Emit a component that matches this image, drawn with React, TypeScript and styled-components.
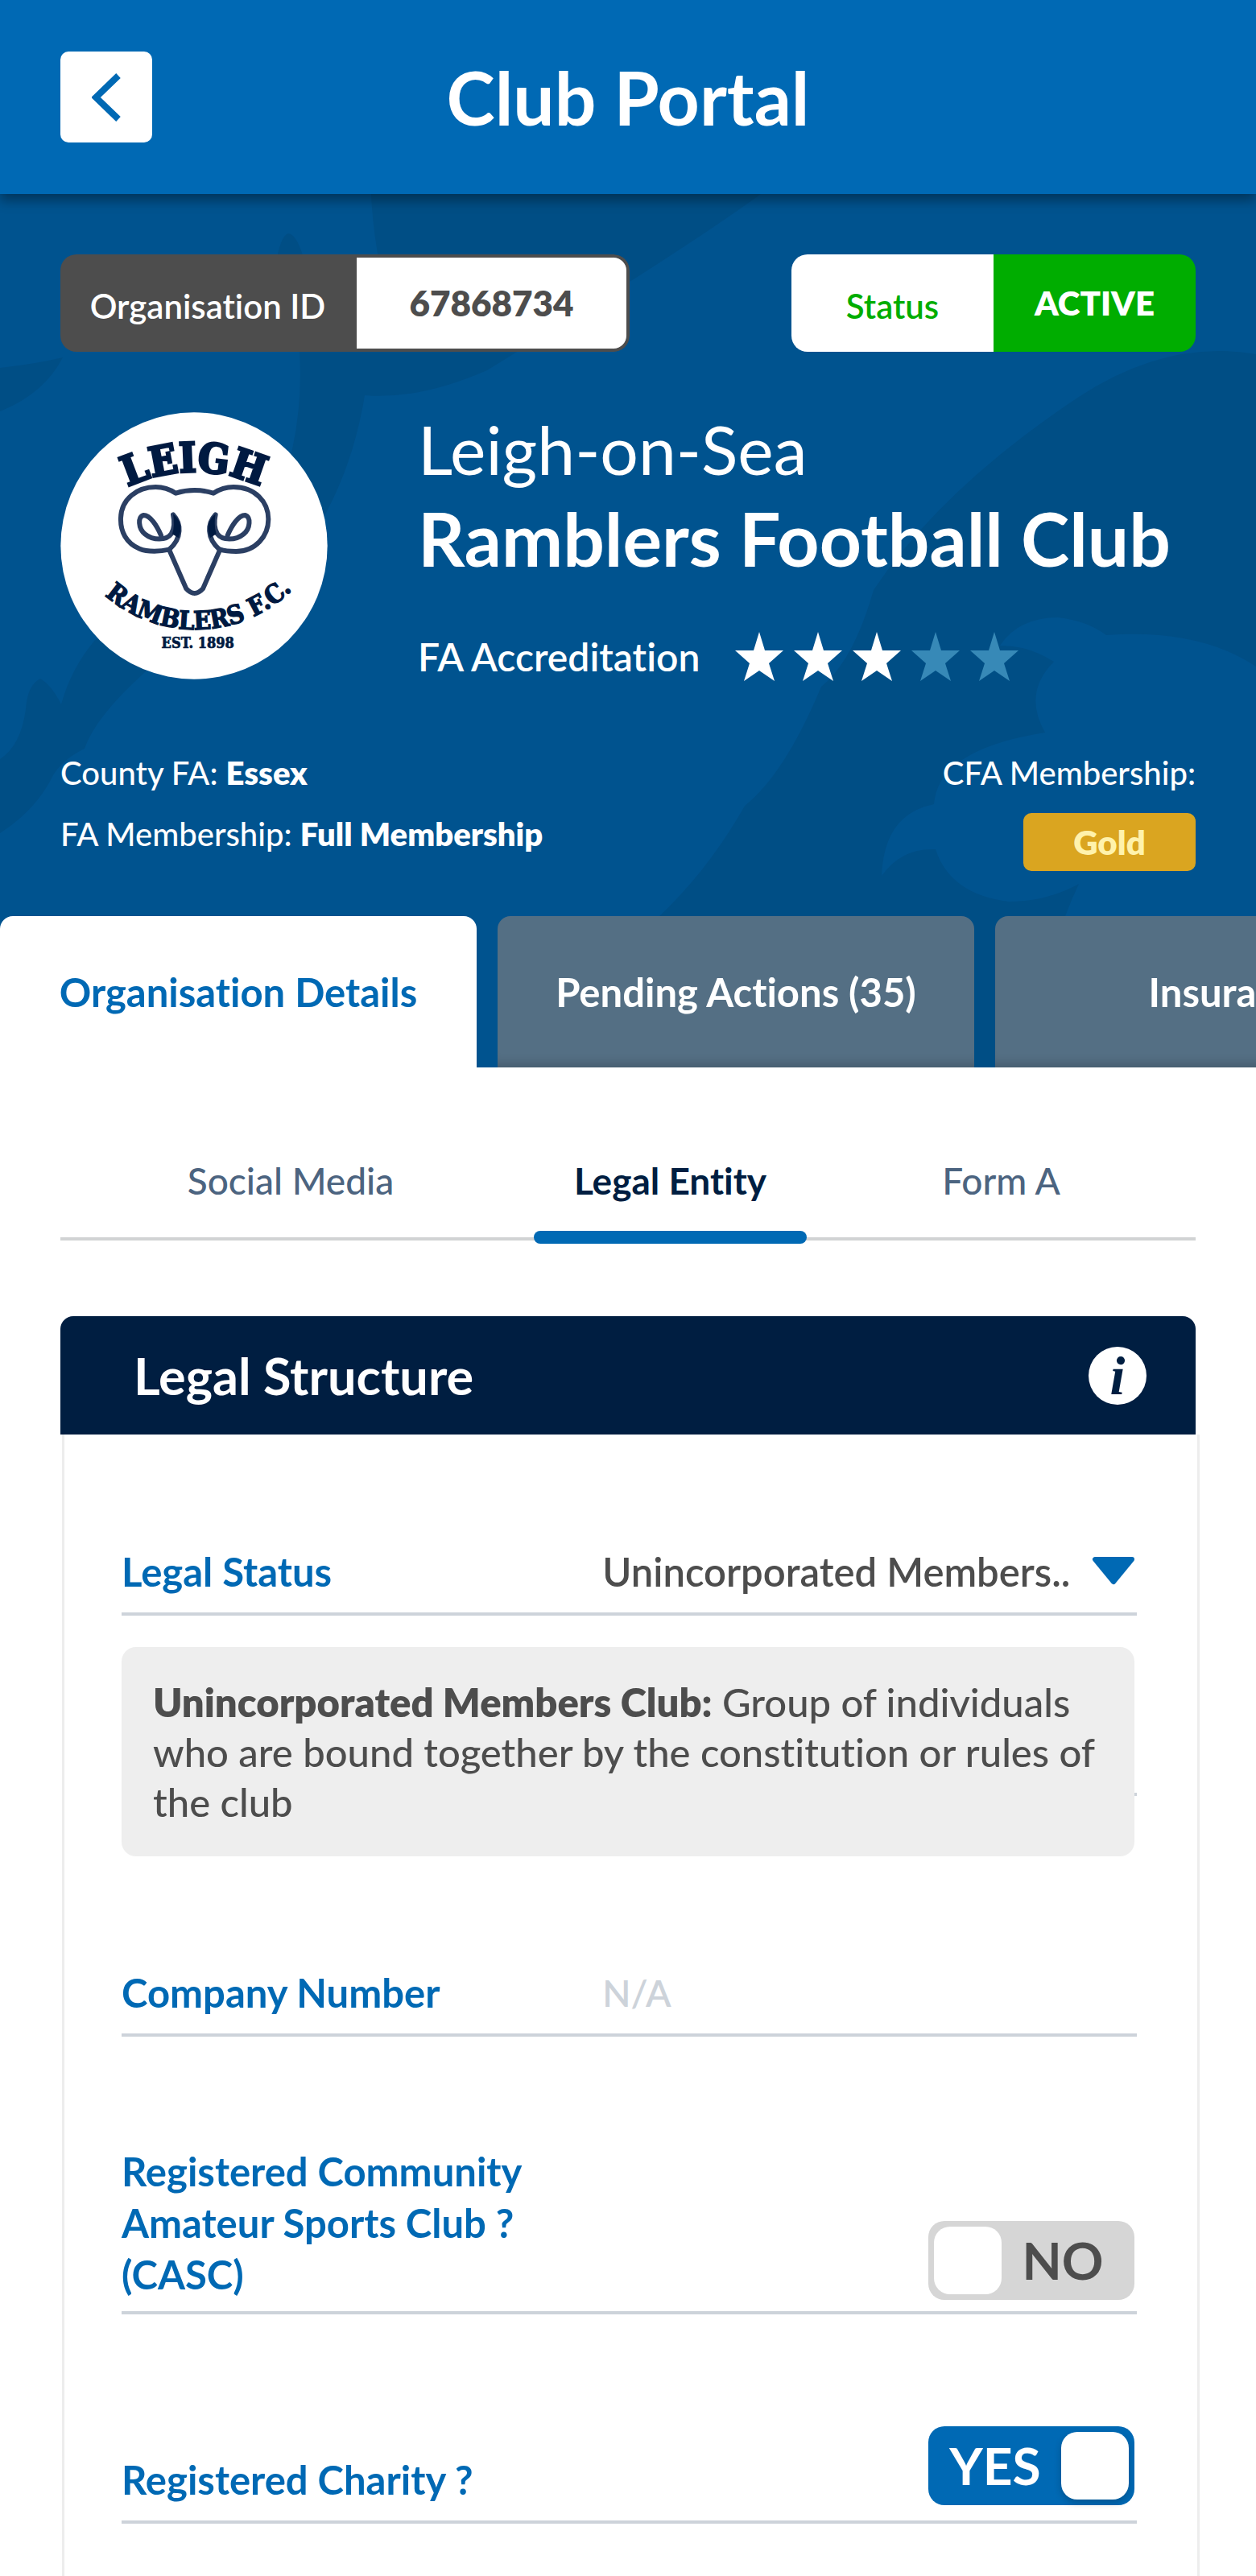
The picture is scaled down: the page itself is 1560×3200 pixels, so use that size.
import React, { useState } from "react";
import styled, { createGlobalStyle } from "styled-components";

const color = {
  blue: "#0069b4",
  hero: "#00538f",
  heroDark: "#004e85",
  navy: "#001e41",
  slate: "#546f84",
  slateText: "#4c6480",
  grey: "#4d4d4d",
  rule: "#cdd3da",
  green: "#00ad00",
};

const GlobalStyle = createGlobalStyle`
  *, *::before, *::after { box-sizing: border-box; }
  body { margin: 0; background: #fff; }
  body, button, input, select {
    font-family: Lato, "Open Sans", sans-serif;
    font-variant-ligatures: none;
  }
`;

const Page = styled.div`
  display: flex;
  flex-direction: column;
  min-height: 100vh;
  overflow-x: hidden;
  font-size: 49px;
  line-height: 64px;
`;

const Header = styled.header`
  position: relative;
  z-index: 1;
  display: grid;
  grid-template-columns: 114px 1fr 114px;
  align-items: center;
  padding: 64px 75px;
  background: ${color.blue};
  box-shadow: 0 8px 14px rgba(0, 0, 0, 0.36);
`;

const BackButton = styled.button`
  display: grid;
  place-items: center;
  height: 113px;
  padding: 0;
  border: 0;
  border-radius: 10px;
  background: #fff;
  cursor: pointer;
`;

const Title = styled.h1`
  margin: 0;
  color: #fff;
  font-size: 91px;
  line-height: 112px;
  font-weight: 700;
  text-align: center;
`;

const Hero = styled.section`
  position: relative;
  isolation: isolate;
  padding-top: 75px;
  background: ${color.hero};
  color: #fff;
`;

const HeroArt = styled.svg`
  position: absolute;
  inset: 0;
  z-index: -1;
  width: 100%;
  height: 100%;
`;

const Spread = styled.div`
  display: flex;
  justify-content: space-between;
  padding: 0 75px;
`;

const Pill = styled.dl`
  display: flex;
  margin: 0;
  height: 121px;
  overflow: hidden;
  border-radius: 20px;
  font-size: 42px;
  line-height: 121px;
  text-align: center;
`;

const PillLabel = styled.dt`
  padding-top: 4px;
  font-weight: 600;
`;

const IdLabel = styled(PillLabel)`
  width: 366px;
  background: ${color.grey};
`;

const IdValue = styled.dd`
  width: 341px;
  margin: 0;
  border: 4px solid ${color.grey};
  border-left-width: 2px;
  border-radius: 0 20px 20px 0;
  background: #fff;
  color: ${color.grey};
  font-size: 44px;
  font-weight: 800;
  line-height: 113px;
`;

const StatusLabel = styled(PillLabel)`
  width: 251px;
  background: #fff;
  color: ${color.green};
`;

const StatusValue = styled.dd`
  width: 251px;
  margin: 0;
  background: ${color.green};
  font-weight: 800;
`;

const Identity = styled.div`
  display: flex;
  gap: 112px;
  padding: 75px 75px 0;
`;

const Crest = styled.svg`
  flex: none;
  width: 332px;
  height: 332px;
`;

const ClubName = styled.h2`
  margin: 0;
  font-size: 91px;
  line-height: 130px;
  font-weight: 700;
  white-space: nowrap;
`;

const Place = styled.span`
  display: block;
  font-size: 84px;
  line-height: 92px;
  font-weight: 400;
`;

const Accreditation = styled.div`
  display: flex;
  align-items: center;
  gap: 44px;
  margin-top: 50px;
  font-size: 48px;
  font-weight: 600;
`;

const Stars = styled.div`
  display: flex;
  gap: 13px;
`;

const Memberships = styled(Spread)`
  margin-top: 74px;
  font-size: 40px;
  line-height: 76px;
`;

const Line = styled.p`
  margin: 0;
  font-weight: 500;
  b { font-weight: 800; }
`;

const RightColumn = styled.div`
  display: flex;
  flex-direction: column;
  align-items: flex-end;
  gap: 12px;
`;

const GoldBadge = styled.span`
  width: 214px;
  border-radius: 10px;
  background: #daa520;
  color: #fff2ac;
  font-size: 42px;
  font-weight: 800;
  line-height: 72px;
  text-align: center;
`;

const Tabs = styled.nav`
  display: flex;
  gap: 26px;
  margin-top: 56px;
  overflow: hidden;
`;

const Tab = styled.a<{ $active?: boolean }>`
  flex: none;
  width: 592px;
  border-radius: 16px 16px 0 0;
  background: ${(p) => (p.$active ? "#fff" : color.slate)};
  box-shadow: ${(p) => (p.$active ? "none" : "inset 0 -16px 14px -12px rgba(0, 0, 0, 0.2)")};
  color: ${(p) => (p.$active ? color.blue : "#fff")};
  font-weight: 700;
  line-height: 188px;
  text-align: center;
  text-decoration: none;
`;

const SubTabs = styled.nav`
  display: grid;
  grid-template-columns: 572fr 355fr 483fr;
  margin: 70px 75px 0;
  border-bottom: 4px solid #d1d3d4;
`;

const SubTab = styled.a<{ $active?: boolean }>`
  position: relative;
  padding-left: ${(p) => (p.$active ? 16 : 0)}px;
  color: ${(p) => (p.$active ? color.navy : color.slateText)};
  font-size: 46px;
  font-weight: ${(p) => (p.$active ? 700 : 500)};
  line-height: 141px;
  text-align: center;
  text-decoration: none;

  &::after {
    content: "";
    display: ${(p) => (p.$active ? "block" : "none")};
    position: absolute;
    right: 0;
    bottom: -8px;
    left: 16px;
    height: 16px;
    border-radius: 8px;
    background: ${color.blue};
  }
`;

const Card = styled.section`
  display: flex;
  flex: 1;
  flex-direction: column;
  margin: 94px 75px 0;
`;

const CardHeader = styled.div`
  display: flex;
  align-items: center;
  justify-content: space-between;
  height: 147px;
  padding: 0 61px 0 91px;
  border-radius: 16px 16px 0 0;
  background: ${color.navy};
`;

const CardTitle = styled.h3`
  margin: 0;
  color: #fff;
  font-size: 63px;
  font-weight: 700;
`;

const InfoButton = styled.button`
  width: 72px;
  height: 72px;
  padding: 0;
  border: 0;
  border-radius: 50%;
  background: #fff;
  color: ${color.navy};
  font: italic 700 68px/72px "Liberation Serif", serif;
`;

const CardBody = styled.form`
  flex: 1;
  margin: 0 -5px 0 2px;
  padding: 138px 75px 64px 71px;
  border: solid #ededed;
  border-width: 0 3px;
`;

const Field = styled.div<{ $gap?: number; $tight?: boolean }>`
  display: grid;
  grid-template-columns: 9fr 10fr;
  align-items: end;
  margin-top: ${(p) => p.$gap ?? 0}px;
  padding-bottom: ${(p) => (p.$tight ? 14 : 19)}px;
  border-bottom: 4px solid ${color.rule};
`;

const Label = styled.label`
  color: ${color.blue};
  font-weight: 700;
`;

const SelectWrap = styled.div`
  display: flex;
  align-items: center;
`;

const Select = styled.select`
  flex: 1;
  min-width: 0;
  height: 64px;
  padding: 0;
  border: 0;
  appearance: none;
  background: transparent;
  color: ${color.grey};
  font-size: 49px;
  font-weight: 600;
`;

const TextInput = styled.input`
  width: 100%;
  height: 64px;
  padding: 0;
  border: 0;
  background: transparent;
  color: ${color.grey};
  font-size: 46px;
  font-weight: 600;
  &::placeholder { color: ${color.rule}; opacity: 1; }
`;

const Note = styled.p`
  position: relative;
  margin: 39px 3px 0 0;
  padding: 37px 39px;
  border-radius: 18px;
  background: #eee;
  color: ${color.grey};
  font-weight: 500;
  line-height: 62px;
  b { font-weight: 800; }

  &::after {
    content: "";
    position: absolute;
    right: -3px;
    bottom: 75px;
    width: 3px;
    height: 4px;
    background: ${color.rule};
  }
`;

const Switch = styled.label<{ $on: boolean }>`
  display: flex;
  flex-direction: ${(p) => (p.$on ? "row" : "row-reverse")};
  align-items: center;
  justify-self: end;
  width: 256px;
  height: 98px;
  margin-right: 3px;
  padding: 7px;
  border-radius: 20px;
  background: ${(p) => (p.$on ? color.blue : "#d6d6d6")};
  color: ${(p) => (p.$on ? "#fff" : color.grey)};
  font-size: 64px;
  font-weight: 700;
  cursor: pointer;
`;

const SwitchText = styled.span`
  flex: 1;
  padding-right: 6px;
  text-align: center;
`;

const SwitchInput = styled.input`
  flex: none;
  width: 84px;
  height: 84px;
  margin: 0;
  appearance: none;
  border-radius: 20px;
  background: #fff;
  box-shadow: ${(p) => (p.checked ? "0 4px 10px rgba(0, 0, 0, 0.2)" : "none")};
`;

function Star({ on }: { on: boolean }) {
  return (
    <svg width="60" height="62" viewBox="0 0 60 62" aria-hidden="true">
      <path
        d="M30 0L37 23H60L42 39L49 61L30 48L11 61L18 39L0 23H23Z"
        fill={on ? "#fff" : "#3789b7"}
      />
    </svg>
  );
}

function ClubCrest() {
  return (
    <Crest viewBox="105 66 996 996" role="img" aria-label="Leigh Ramblers F.C. crest">
      <defs>
        <path id="crest-top" d="M300 376A570 570 0 0 1 907 376" />
        <path id="crest-bottom" d="M214 690A513 513 0 0 0 1022 668" />
      </defs>
      <circle cx="603" cy="564" r="497" fill="#fff" />
      <g
        fill="#001a41"
        stroke="#001a41"
        fontFamily="DejaVu Serif Condensed, DejaVu Serif, serif"
        fontWeight="700"
        textAnchor="middle"
      >
        <text fontSize="152" strokeWidth="9">
          <textPath href="#crest-top" startOffset="50%">LEIGH</textPath>
        </text>
        <text fontSize="95" strokeWidth="4">
          <textPath href="#crest-bottom" startOffset="50%">RAMBLERS F.C.</textPath>
        </text>
        <text x="617" y="946" fontSize="54" strokeWidth="2">EST. 1898</text>
      </g>
      <g fill="none" stroke="#2b3f63" strokeWidth="18" strokeLinejoin="round" strokeLinecap="round">
        <path d="M510 578C480 585 430 588 400 575C350 555 328 510 330 460C332 390 390 345 460 345C490 345 515 355 535 368C580 354 630 354 675 368C695 355 720 345 750 345C830 345 880 400 880 465C880 530 830 585 760 585C735 585 715 583 700 578L636 724Q605 758 574 724Z" />
        <path d="M480 525C465 490 440 450 415 450C392 455 395 500 420 520C450 545 500 545 518 520C530 500 530 470 525 448C555 480 560 535 510 578" />
        <path d="M728 525C743 490 768 450 793 450C816 455 813 500 788 520C758 545 708 545 690 520C678 500 678 470 683 448C653 480 648 535 698 578" />
      </g>
      <g fill="#001a41">
        <path d="M525 445Q568 480 545 535L522 520Q532 490 525 445Z" />
        <path d="M683 445Q640 480 663 535L686 520Q676 490 683 445Z" />
      </g>
    </Crest>
  );
}

function LionPattern() {
  return (
    <HeroArt viewBox="0 0 1560 1085" preserveAspectRatio="xMidYMin slice" aria-hidden="true">
      <g fill={color.heroDark}>
        <path d="M461 0Q463 45 472 90L380 90Q370 50 358 49Q348 52 342 90L372 196Q376 260 362 322L340 440L118 554Q88 590 76 634Q64 610 50 602Q34 610 32 640Q26 685 0 702V794Q45 765 66 722Q78 702 105 689Q118 650 180 594L405 396Q440 330 453 250Q520 256 605 219Q700 160 790 104Q890 40 945 0Z" />
        <path d="M0 216Q45 211 78 203Q55 248 0 270Z" />
        <path d="M1560 199Q1450 180 1340 252Q1170 365 1085 492Q1060 580 1020 612Q975 720 925 760Q880 840 816 900V1085H1290Q1295 950 1340 857Q1300 879 1253 879Q1180 870 1162 814Q1120 812 1095 847Q1098 770 1160 758Q1165 690 1298 669Q1270 620 1309 581Q1275 560 1242 561Q1265 526 1314 526Q1350 530 1374 548Q1490 540 1560 587Z" />
      </g>
    </HeroArt>
  );
}

function Toggle({ id, initial }: { id: string; initial: boolean }) {
  const [on, setOn] = useState(initial);
  return (
    <Switch $on={on}>
      <SwitchText>{on ? "YES" : "NO"}</SwitchText>
      <SwitchInput id={id} type="checkbox" role="switch" checked={on} onChange={(e) => setOn(e.target.checked)} />
    </Switch>
  );
}

export default function App() {
  return (
    <Page>
      <GlobalStyle />
      <Header>
        <BackButton type="button" aria-label="Back">
          <svg width="36" height="60" viewBox="0 0 36 60" aria-hidden="true">
            <path d="M33 3L5 30L33 57" fill="none" stroke={color.blue} strokeWidth="8" />
          </svg>
        </BackButton>
        <Title>Club Portal</Title>
      </Header>

      <Hero>
        <LionPattern />
        <Spread>
          <Pill>
            <IdLabel>Organisation ID</IdLabel>
            <IdValue>67868734</IdValue>
          </Pill>
          <Pill>
            <StatusLabel>Status</StatusLabel>
            <StatusValue>ACTIVE</StatusValue>
          </Pill>
        </Spread>
        <Identity>
          <ClubCrest />
          <div>
            <ClubName>
              <Place>Leigh-on-Sea</Place>
              Ramblers Football Club
            </ClubName>
            <Accreditation>
              FA Accreditation
              <Stars role="img" aria-label="3 out of 5 stars">
                {[1, 2, 3, 4, 5].map((n) => (
                  <Star key={n} on={n <= 3} />
                ))}
              </Stars>
            </Accreditation>
          </div>
        </Identity>
        <Memberships>
          <div>
            <Line>County FA: <b>Essex</b></Line>
            <Line>FA Membership: <b>Full Membership</b></Line>
          </div>
          <RightColumn>
            <Line>CFA Membership:</Line>
            <GoldBadge>Gold</GoldBadge>
          </RightColumn>
        </Memberships>
        <Tabs>
          <Tab href="#details" $active>Organisation Details</Tab>
          <Tab href="#actions">Pending Actions (35)</Tab>
          <Tab href="#insurance">Insurance</Tab>
        </Tabs>
      </Hero>

      <SubTabs>
        <SubTab href="#social">Social Media</SubTab>
        <SubTab href="#legal" $active>Legal Entity</SubTab>
        <SubTab href="#form-a">Form A</SubTab>
      </SubTabs>

      <Card>
        <CardHeader>
          <CardTitle>Legal Structure</CardTitle>
          <InfoButton type="button">i</InfoButton>
        </CardHeader>
        <CardBody>
          <Field>
            <Label htmlFor="legal-status">Legal Status</Label>
            <SelectWrap>
              <Select id="legal-status">
                <option>Unincorporated Members..</option>
              </Select>
              <svg width="58" height="36" viewBox="0 0 58 36" aria-hidden="true">
                <path d="M6 3H52L29 31Z" fill={color.blue} stroke={color.blue} strokeWidth="6" strokeLinejoin="round" />
              </svg>
            </SelectWrap>
          </Field>
          <Note>
            <b>Unincorporated Members Club:</b> Group of individuals who are bound together by the constitution or rules of the club
          </Note>
          <Field $gap={137}>
            <Label htmlFor="company-number">Company Number</Label>
            <TextInput id="company-number" placeholder="N/A" />
          </Field>
          <Field $gap={135} $tight>
            <Label htmlFor="casc">
              Registered Community
              <br />
              Amateur Sports Club ?
              <br />
              (CASC)
            </Label>
            <Toggle id="casc" initial={false} />
          </Field>
          <Field $gap={139}>
            <Label htmlFor="charity">Registered Charity ?</Label>
            <Toggle id="charity" initial />
          </Field>
        </CardBody>
      </Card>
    </Page>
  );
}
